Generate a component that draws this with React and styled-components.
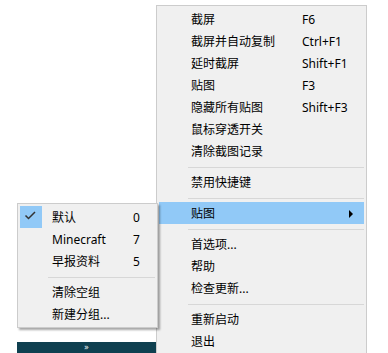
import styled, { createGlobalStyle } from "styled-components";

const GlobalStyle = createGlobalStyle`
  html, body {
    margin: 0;
    padding: 0;
    background: #ffffff;
    overflow: hidden;
  }
`;

const Stage = styled.div`
  position: relative;
  width: 388px;
  height: 353px;
  display: flex;
  flex-direction: column;
  justify-content: flex-end;
  padding-left: 17px;
  box-sizing: border-box;
  font-family: "Noto Sans", "Noto Sans CJK SC", sans-serif;
  font-size: 12px;
  color: #000;
`;

const DockBar = styled.div`
  width: 139px;
  height: 11px;
  background: #0f4050;
  color: #fff;
  display: flex;
  justify-content: center;
  align-items: flex-end;
  font-family: "DejaVu Sans", sans-serif;
  font-size: 8px;
  line-height: 8px;
  padding-bottom: 1px;
  box-sizing: border-box;
`;

const Menu = styled.div`
  position: absolute;
  left: ${(p) => p.$left}px;
  top: ${(p) => p.$top}px;
  width: ${(p) => p.$width}px;
  box-sizing: border-box;
  background: #f0f0f0;
  border: 1px solid #cccccc;
  padding: 2px;
  display: flex;
  flex-direction: column;
  box-shadow: ${(p) => (p.$shadow ? "2px 2px 2px rgba(0,0,0,0.35)" : "none")};
  z-index: ${(p) => (p.$shadow ? 2 : 1)};
`;

const Item = styled.div`
  position: relative;
  height: 22px;
  display: flex;
  align-items: center;
  padding-left: 32px;
  background: ${(p) => (p.$active ? "#91c9f7" : "transparent")};
  white-space: nowrap;
`;

const Label = styled.span`
  width: ${(p) => p.$width}px;
  flex-shrink: 0;
`;

const Hint = styled.span``;

const Separator = styled.div`
  height: 1px;
  background: #d7d7d7;
  margin: 5px 0 3px ${(p) => p.$indent}px;
`;

const CheckBox = styled.div`
  position: absolute;
  left: 0;
  top: 0;
  width: 22px;
  height: 22px;
  background: #91c9f7;
  display: flex;
  align-items: center;
  justify-content: center;
`;

const Arrow = styled.div`
  position: absolute;
  right: 11px;
  top: 8px;
  width: 0;
  height: 0;
  border-top: 4px solid transparent;
  border-bottom: 4px solid transparent;
  border-left: 4px solid #000;
`;

const mainItems = [
  ["截屏", "F6"],
  ["截屏并自动复制", "Ctrl+F1"],
  ["延时截屏", "Shift+F1"],
  ["贴图", "F3"],
  ["隐藏所有贴图", "Shift+F3"],
  ["鼠标穿透开关", ""],
  ["清除截图记录", ""],
  "sep",
  ["禁用快捷键", ""],
  "sep",
  ["贴图", "", "sub"],
  "sep",
  ["首选项...", ""],
  ["帮助", ""],
  ["检查更新...", ""],
  "sep",
  ["重新启动", ""],
  ["退出", ""],
];

const groups = [
  ["默认", "0", true],
  ["Minecraft", "7"],
  ["早报资料", "5"],
];

export default function App() {
  return (
    <>
      <GlobalStyle />
      <Stage>
        <DockBar>»</DockBar>

        <Menu $left={156} $top={5} $width={211}>
          {mainItems.map((it, i) =>
            it === "sep" ? (
              <Separator key={i} $indent={29} />
            ) : (
              <Item key={i} $active={it[2] === "sub"}>
                <Label $width={111}>{it[0]}</Label>
                <Hint>{it[1]}</Hint>
                {it[2] === "sub" && <Arrow />}
              </Item>
            )
          )}
        </Menu>

        <Menu $left={17} $top={203} $width={141} $shadow>
          {groups.map(([name, count, checked]) => (
            <Item key={name}>
              {checked && (
                <CheckBox>
                  <svg width="22" height="22" viewBox="0 0 22 22">
                    <polyline
                      points="5.5,9.5 8.5,12.5 15,6"
                      fill="none"
                      stroke="#333"
                      strokeWidth="1.5"
                    />
                  </svg>
                </CheckBox>
              )}
              <Label $width={81}>{name}</Label>
              <Hint>{count}</Hint>
            </Item>
          ))}
          <Separator $indent={28} />
          <Item>清除空组</Item>
          <Item>新建分组...</Item>
        </Menu>
      </Stage>
    </>
  );
}
